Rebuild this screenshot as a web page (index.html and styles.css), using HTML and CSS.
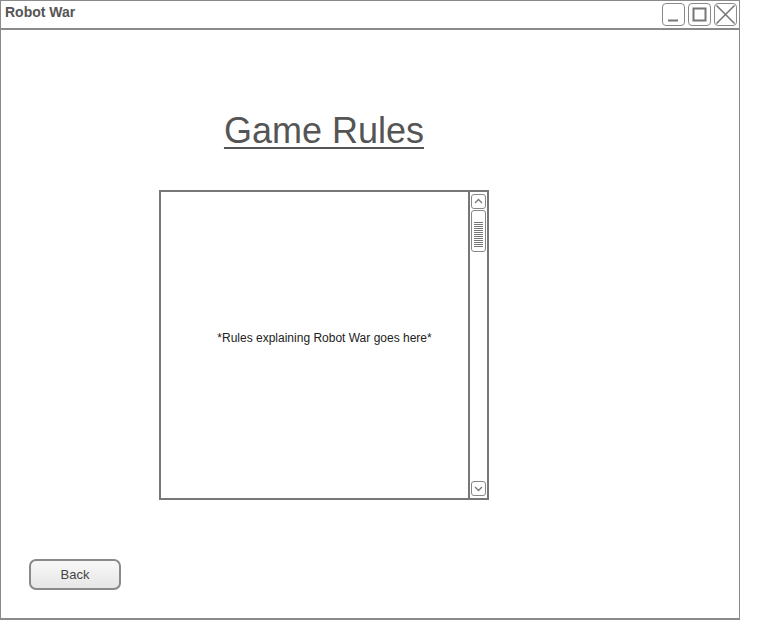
FILE: index.html
```html
<!DOCTYPE html>
<html>
<head>
<meta charset="utf-8">
<link rel="stylesheet" href="styles.css">
</head>
<body>
<div class="window">
  <div class="titlebar">
    <span class="title">Robot War</span>
    <div class="controls">
      <span class="ctl"><svg width="21" height="21" viewBox="0 0 21 21"><line x1="5" y1="16.5" x2="15" y2="16.5" stroke="#777" stroke-width="2"/></svg></span>
      <span class="ctl"><svg width="21" height="21" viewBox="0 0 21 21"><rect x="4.5" y="4.5" width="12" height="12" fill="none" stroke="#777" stroke-width="2"/></svg></span>
      <span class="ctl"><svg width="21" height="21" viewBox="0 0 21 21"><line x1="1.5" y1="1.5" x2="19.5" y2="19.5" stroke="#777" stroke-width="1.6"/><line x1="19.5" y1="1.5" x2="1.5" y2="19.5" stroke="#777" stroke-width="1.6"/></svg></span>
    </div>
  </div>
  <div class="content">
    <div class="game">
      <h1 class="heading">Game Rules</h1>
      <div class="rulesbox">
        <div class="rulestext">*Rules explaining Robot War goes here*</div>
        <div class="scrollbar">
          <div class="sbtn"><svg width="13" height="13" viewBox="0 0 13 13"><polyline points="3,8 6.5,4.5 10,8" fill="none" stroke="#777" stroke-width="1.3"/></svg></div>
          <div class="thumb">
            <div class="grip"></div>
          </div>
          <div class="track"></div>
          <div class="sbtn"><svg width="13" height="13" viewBox="0 0 13 13"><polyline points="3,5 6.5,8.5 10,5" fill="none" stroke="#777" stroke-width="1.3"/></svg></div>
        </div>
      </div>
    </div>
    <button class="back">Back</button>
  </div>
</div>
</body>
</html>
```

FILE: styles.css
```css
html, body {
  margin: 0;
  padding: 0;
  background: #fff;
}
body {
  font-family: "Liberation Sans", Arial, sans-serif;
  color: #555;
}
.window {
  width: 740px;
  height: 620px;
  box-sizing: border-box;
  border: 1px solid #8a8a8a;
  border-bottom-width: 2px;
  display: flex;
  flex-direction: column;
}
.titlebar {
  height: 27px;
  border-bottom: 2px solid #8a8a8a;
  display: flex;
  justify-content: space-between;
  align-items: flex-start;
  flex-shrink: 0;
}
.title {
  font-weight: bold;
  font-size: 14px;
  color: #555;
  padding: 3px 0 0 4px;
  line-height: 16px;
}
.controls {
  display: flex;
  gap: 3px;
  padding: 2px 2px 0 0;
}
.ctl {
  width: 21px;
  height: 21px;
  border: 1px solid #8a8a8a;
  border-radius: 4px;
  display: flex;
}
.ctl svg { display: block; }
.content {
  display: flex;
  flex-direction: column;
  align-items: flex-start;
  padding-left: 28px;
}
.game {
  margin-left: 130px;
  width: 330px;
  display: flex;
  flex-direction: column;
  align-items: center;
}
.heading {
  margin: 80px 0 0 0;
  font-size: 36px;
  line-height: 42px;
  font-weight: normal;
  color: #555;
  text-decoration: underline;
  text-decoration-thickness: 2px;
  text-underline-offset: 4px;
}
.rulesbox {
  margin-top: 38px;
  width: 330px;
  height: 310px;
  box-sizing: border-box;
  border: 2px solid #777;
  display: flex;
}
.rulestext {
  flex: 1;
  display: flex;
  align-items: center;
  justify-content: center;
  font-size: 12px;
  color: #222;
  padding: 0 0 14px 20px;
}
.scrollbar {
  width: 17px;
  border-left: 2px solid #777;
  display: flex;
  flex-direction: column;
  align-items: center;
  padding: 2px 0;
  gap: 1px;
}
.sbtn {
  width: 13px;
  height: 13px;
  border: 1px solid #888;
  border-radius: 3px;
  display: flex;
  flex-shrink: 0;
}
.sbtn svg { display: block; }
.thumb {
  width: 13px;
  height: 40px;
  border: 1px solid #888;
  border-radius: 3px;
  display: flex;
  align-items: center;
  justify-content: center;
  flex-shrink: 0;
}
.grip {
  width: 9px;
  height: 25px;
  margin-top: 6px;
  background: repeating-linear-gradient(to bottom, #777 0, #777 1px, transparent 1px, transparent 2px);
}
.track { flex: 1; }
.back {
  margin-top: 59px;
  width: 92px;
  height: 31px;
  border: 2px solid #8a8a8a;
  border-radius: 7px;
  background: linear-gradient(to bottom, #f8f8f8, #e6e6e6);
  font-family: "Liberation Sans", Arial, sans-serif;
  font-size: 13px;
  color: #444;
  padding: 0;
}
```
